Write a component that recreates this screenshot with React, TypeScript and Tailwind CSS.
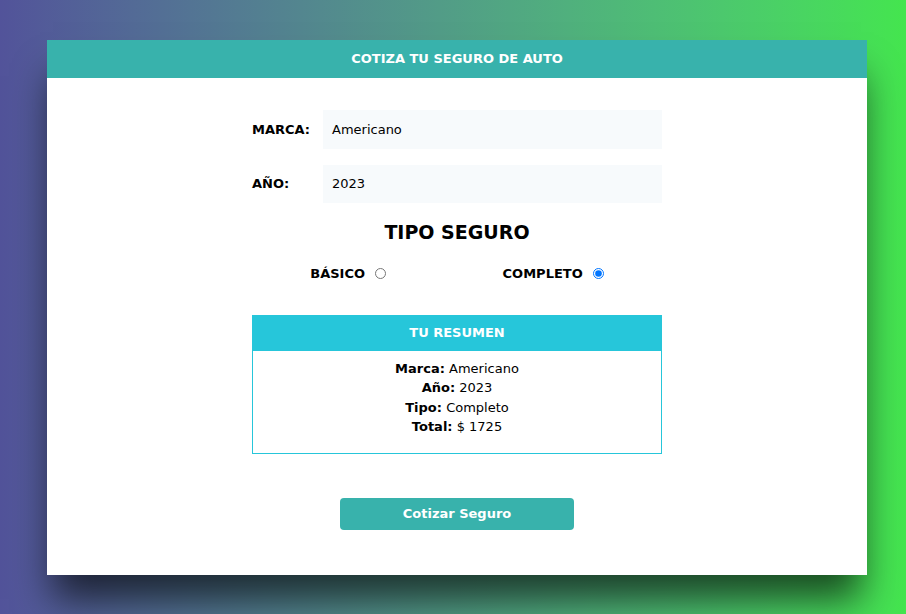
export default function App() {
  return (
    <div className="flex min-h-screen justify-center bg-linear-to-r from-[#52539a] to-[#44e54e] pt-10 pl-2 font-['DejaVu_Sans',sans-serif] text-[13px] text-black">
      <div className="h-[535px] w-[820px] bg-white shadow-[0_30px_36px_-6px_rgba(0,0,0,0.65)]">
        {/* Header */}
        <div className="flex h-[38px] items-center justify-center bg-[#38b2ac]">
          <h1 className="text-[13px] font-bold text-white">COTIZA TU SEGURO DE AUTO</h1>
        </div>

        {/* Form */}
        <div className="mx-auto w-[410px] pt-8">
          <div className="flex items-center">
            <label className="w-[71px] font-bold">MARCA:</label>
            <div className="flex h-[39px] flex-1 items-center bg-[#f7fafc] pl-[9px]">Americano</div>
          </div>
          <div className="mt-4 flex items-center">
            <label className="w-[71px] font-bold">AÑO:</label>
            <div className="flex h-[38px] flex-1 items-center bg-[#f7fafc] pl-[9px]">2023</div>
          </div>

          <h2 className="mt-[17px] text-center text-[19px] leading-[24px] font-bold">TIPO SEGURO</h2>

          <div className="mt-[20px] flex justify-around">
            <div className="flex items-center gap-[10px]">
              <span className="font-bold">BÁSICO</span>
              <input type="radio" name="plan" className="m-0 h-[11px] w-[11px]" readOnly />
            </div>
            <div className="flex items-center gap-[10px]">
              <span className="font-bold">COMPLETO</span>
              <input type="radio" name="plan" className="m-0 h-[11px] w-[11px]" defaultChecked />
            </div>
          </div>

          {/* Resumen */}
          <div className="mt-[31px] border border-[#26c6da]">
            <div className="flex h-[35px] items-center justify-center bg-[#26c6da] font-bold text-white">
              TU RESUMEN
            </div>
            <div className="pt-[8px] pb-[16px] text-center leading-[19.5px]">
              <p><span className="font-bold">Marca:</span> Americano</p>
              <p><span className="font-bold">Año:</span> 2023</p>
              <p><span className="font-bold">Tipo:</span> Completo</p>
              <p><span className="font-bold">Total:</span> $ 1725</p>
            </div>
          </div>

          <div className="mt-[44px] flex justify-center">
            <button className="h-8 w-[234px] rounded bg-[#38b2ac] font-bold text-white">
              Cotizar Seguro
            </button>
          </div>
        </div>
      </div>
    </div>
  )
}
